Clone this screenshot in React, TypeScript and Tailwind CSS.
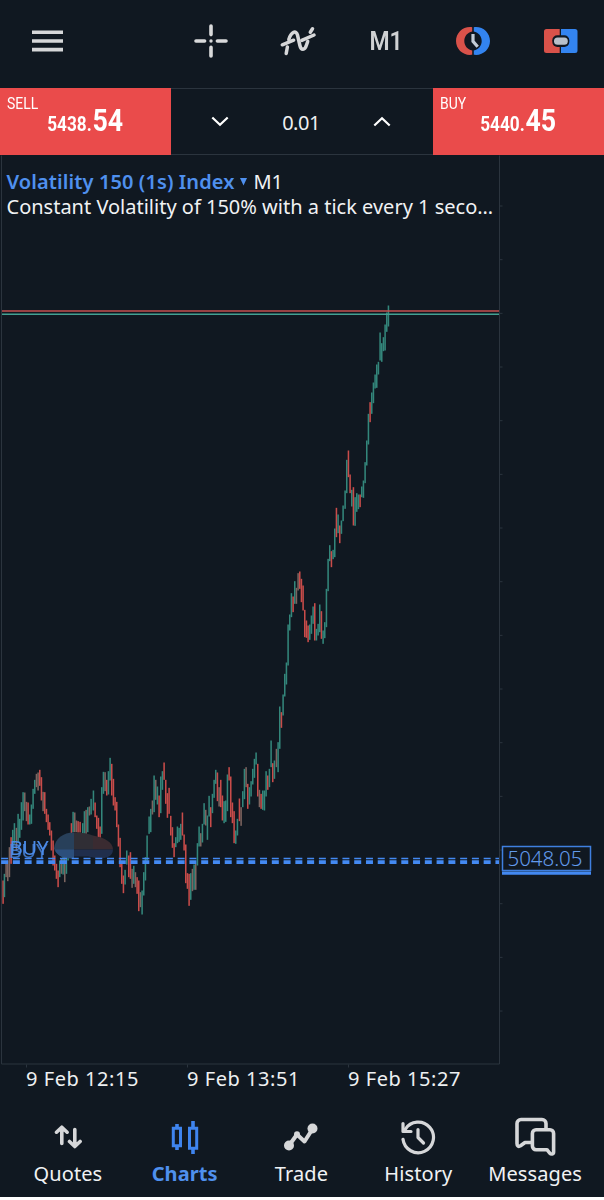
import type { ReactNode } from 'react'

const TEXT_FONT = "font-['Noto_Sans',sans-serif]"

// [x, high, low, kind] in thirds of a pixel. kind: 0 down, 1 up, 2 overlapping
type Bar = [number, number, number, number]

const SEGMENTS: { left: number; top: number; bars: Bar[] }[] = [
  {
    left: 0,
    top: 740,
    bars: [
      [9, 420, 490, 0], [13, 400, 470, 1], [18, 368, 410, 2], [23, 360, 422, 2], [28, 320, 410, 2], [33, 290, 370, 0],
      [38, 268, 330, 1], [43, 248, 310, 1], [49, 262, 330, 2], [54, 220, 305, 1], [59, 235, 292, 1], [64, 185, 268, 1],
      [69, 155, 240, 1], [74, 156, 212, 2], [79, 184, 242, 2], [84, 186, 252, 0], [89, 222, 252, 1], [94, 192, 250, 1],
      [99, 145, 205, 1], [104, 118, 160, 1], [109, 100, 140, 2], [114, 96, 150, 2], [119, 88, 136, 0], [124, 110, 180, 0],
      [129, 154, 212, 2], [134, 155, 220, 0], [139, 205, 245, 0], [144, 222, 268, 0], [149, 245, 285, 0], [154, 270, 330, 0],
      [159, 300, 375, 0], [164, 345, 390, 0], [169, 370, 415, 0], [174, 390, 440, 0], [179, 360, 410, 1], [184, 355, 400, 2],
      [189, 350, 402, 1], [194, 345, 425, 2], [199, 320, 400, 1], [204, 300, 360, 1], [209, 290, 340, 1], [214, 248, 300, 0],
      [219, 214, 275, 1], [224, 216, 275, 2], [229, 240, 275, 2], [234, 242, 276, 0], [240, 244, 276, 0], [248, 248, 290, 1],
      [253, 212, 280, 1], [258, 208, 280, 2], [263, 200, 275, 1], [268, 198, 225, 2], [273, 175, 222, 1], [280, 150, 210, 1],
      [285, 186, 230, 0], [290, 225, 265, 0], [295, 232, 290, 0], [300, 258, 292, 0], [305, 140, 280, 1], [310, 94, 160, 1],
      [315, 95, 152, 2], [320, 118, 165, 0], [325, 92, 162, 1], [330, 52, 120, 1], [335, 70, 165, 0], [340, 115, 195, 0],
      [345, 170, 210, 0], [350, 184, 260, 0], [355, 252, 318, 0], [360, 292, 380, 0], [365, 362, 430, 0], [370, 405, 458, 0],
      [375, 388, 432, 1], [380, 330, 372, 1], [386, 345, 410, 0], [391, 335, 415, 0], [396, 385, 442, 2], [401, 376, 430, 1],
      [406, 395, 440, 2], [411, 410, 460, 0], [416, 420, 512, 0], [421, 455, 500, 2], [426, 450, 522, 1], [431, 395, 465, 1],
      [436, 350, 420, 1], [441, 285, 360, 1],
    ],
  },
  {
    left: 130,
    top: 740,
    bars: [
      [57, 228, 280, 1], [62, 205, 275, 1], [67, 180, 222, 2], [72, 105, 215, 1], [77, 118, 178, 2], [82, 138, 192, 1],
      [87, 165, 230, 0], [92, 108, 218, 1], [97, 92, 148, 1], [102, 66, 118, 0], [107, 118, 190, 0], [112, 158, 232, 0],
      [117, 142, 220, 0], [122, 226, 285, 0], [127, 260, 322, 0], [132, 308, 350, 0], [137, 290, 320, 1], [142, 258, 308, 1],
      [147, 262, 304, 1], [152, 250, 298, 1], [157, 216, 285, 0], [162, 282, 330, 0], [167, 312, 428, 0], [172, 398, 445, 0],
      [177, 400, 496, 0], [182, 398, 478, 1], [187, 385, 452, 2], [192, 372, 448, 1], [197, 370, 448, 2], [202, 308, 375, 1],
      [207, 258, 318, 1], [212, 278, 318, 2], [217, 250, 306, 1], [222, 188, 252, 1], [227, 208, 255, 2], [232, 225, 298, 1],
      [237, 166, 228, 1], [242, 200, 260, 0], [247, 160, 218, 1], [252, 118, 172, 1], [257, 88, 130, 1], [262, 96, 182, 0],
      [267, 140, 198, 2], [272, 118, 200, 0], [277, 165, 240, 0], [282, 182, 248, 1], [287, 180, 244, 1], [292, 102, 212, 1],
      [297, 80, 120, 0], [302, 108, 230, 0], [307, 186, 248, 0], [312, 212, 308, 0], [317, 270, 310, 1], [322, 235, 285, 1],
      [328, 174, 242, 0], [333, 200, 256, 2], [338, 152, 200, 1], [343, 85, 176, 1], [348, 80, 140, 2], [353, 130, 205, 0],
      [358, 140, 192, 1], [363, 122, 168, 1], [368, 85, 132, 1], [373, 55, 112, 1], [378, 36, 72, 1], [383, 70, 168, 0],
      [388, 148, 200, 2], [393, 160, 205, 0], [398, 150, 208, 1], [403, 150, 210, 1], [408, 92, 168, 1], [413, 105, 148, 0],
      [418, 85, 140, 1],
    ],
  },
  {
    left: 255,
    top: 540,
    bars: [
      [48, 600, 680, 1], [53, 668, 725, 0], [58, 660, 715, 1], [64, 625, 680, 2], [69, 605, 695, 1], [74, 498, 625, 1],
      [79, 515, 562, 0], [84, 462, 525, 1], [89, 400, 468, 1], [94, 366, 432, 1], [99, 252, 375, 1], [104, 222, 270, 1],
      [109, 158, 230, 1], [114, 168, 215, 0], [119, 122, 190, 1], [124, 142, 190, 2], [129, 98, 150, 2], [134, 93, 145, 0],
      [139, 115, 185, 0], [144, 135, 210, 0], [149, 208, 290, 0], [154, 240, 292, 0], [159, 255, 305, 0], [164, 252, 298, 1],
      [169, 225, 280, 1], [174, 198, 250, 1], [179, 188, 300, 0], [184, 265, 300, 1], [189, 250, 285, 1], [194, 192, 275, 1],
      [199, 212, 295, 0], [204, 270, 310, 1], [209, 245, 293, 1], [214, 145, 260, 1], [219, 55, 152, 1], [224, 14, 62, 1],
      [229, 32, 80, 0], [234, 28, 56, 1],
    ],
  },
  {
    left: 310,
    top: 290,
    bars: [
      [74, 714, 800, 1], [79, 652, 740, 0], [84, 672, 728, 1], [89, 705, 758, 0], [94, 690, 730, 1], [99, 645, 692, 1],
      [105, 600, 655, 1], [110, 508, 608, 1], [115, 480, 560, 0], [120, 552, 608, 0], [125, 598, 648, 1], [130, 590, 705, 0],
      [135, 620, 706, 1], [140, 608, 664, 1], [145, 612, 656, 1], [150, 612, 650, 0], [155, 588, 620, 1], [160, 570, 622, 1],
      [165, 515, 578, 1], [170, 450, 525, 1], [175, 370, 462, 1], [180, 335, 395, 0], [185, 306, 370, 1], [190, 276, 338, 1],
      [195, 252, 294, 1], [200, 222, 292, 1], [205, 214, 252, 1], [210, 126, 210, 1], [215, 158, 214, 1], [220, 140, 182, 1],
      [225, 102, 180, 1], [230, 66, 124, 1], [235, 45, 108, 1],
    ],
  },
]

const BAR_COLORS = ['#c94c4a', '#33867b', '#7d6560']
const PRICE_TICKS = Array.from({ length: 16 }, (_, i) => 205.5 + i * 53.67)
const TIMES = ['9 Feb 12:15', '9 Feb 13:51', '9 Feb 15:27']

function Toolbar() {
  return (
    <header className="flex h-[88px] shrink-0 items-center pb-[6px]">
      <div className="flex flex-1 pl-[31.5px]">
        <svg width="31" height="22" viewBox="0 0 31 22" fill="#d6d7d9">
          <path d="M0 .5h31v3.6H0zM0 9.2h31v3.6H0zM0 17.8h31v3.6H0z" />
        </svg>
      </div>
      <div className="grid w-[436.5px] grid-cols-5 items-center justify-items-center">
        <svg width="36" height="36" viewBox="0 0 36 36" stroke="#d9dadb" strokeWidth="3.6" strokeLinecap="round">
          <path d="M18 3v8.6M18 24.4V33M3 18h8.6M24.4 18H33" />
          <circle cx="18" cy="18" r="1.7" fill="#d9dadb" stroke="none" />
        </svg>
        <svg width="38" height="34" viewBox="0 0 38 34" fill="none" stroke="#d6d7d9" strokeWidth="3.5" strokeLinecap="round">
          <path d="M3.3 20.8 14.6 16.2M22.8 16.400 35 11" />
          <path d="M7.200 29.500 8.400 23M9.800 15.500C12.200 7.500 17.200 6 18.500 11l2.400 10.500c1.100 5 4.900 5 6.600-.5l1.200-3.500M31.300 8.200l2.200-3.400" />
        </svg>
        <span className="inline-block scale-x-[0.92] font-['Roboto',sans-serif] text-[25px] leading-none font-semibold text-[#cfd1d3]">M1</span>
        <svg width="36" height="30" viewBox="0 0 36 30">
          <path d="M17.2 1.200C8.500-.1 1 6.500 1 15s7.500 15.100 16.200 13.800v-4.300C12.400 23.700 9.300 19.600 9.300 15s3.100-8.700 7.900-9.500z" fill="#d9524a" />
          <path d="M18.800 1.200C27.500-.1 35 6.500 35 15s-7.500 15.100-16.200 13.800v-4.300c4.800-.8 7.900-4.900 7.900-9.500s-3.100-8.700-7.900-9.500z" fill="#3384f0" />
          <path d="M18 8v7.400l4.700 5.300" fill="none" stroke="#c3ccd6" strokeWidth="3.200" />
        </svg>
        <svg width="35" height="26" viewBox="0 0 35 26">
          <path d="M3.500 1h13.200v24H3.500a2.500 2.500 0 0 1-2.500-2.500v-19A2.500 2.500 0 0 1 3.500 1z" fill="#d9524a" />
          <path d="M18 1h14a2.500 2.500 0 0 1 2.500 2.500v19A2.500 2.500 0 0 1 32 25H18z" fill="#3384f0" />
          <rect x="9.300" y="7.300" width="17" height="11.600" rx="5" fill="#101821" />
          <rect x="11" y="9.400" width="13.800" height="7.400" rx="3.500" fill="#b7c0ca" />
        </svg>
      </div>
    </header>
  )
}

function PriceButton({ label, whole, fraction }: { label: string; whole: string; fraction: string }) {
  return (
    <button className="relative flex h-full w-[171px] justify-center bg-[#ea4b4b] font-['Roboto',sans-serif] text-white">
      <span className="absolute top-[4px] left-[7px] origin-left scale-x-[0.82] text-[17px] leading-[22px]">{label}</span>
      <span className="mt-[13px] flex scale-x-[0.86] items-baseline leading-[40px] font-bold">
        <span className="text-[20px]">{whole}</span>
        <span className="ml-px text-[31px]">{fraction}</span>
      </span>
    </button>
  )
}

function TradeRow() {
  return (
    <div className="flex h-[66.5px] shrink-0">
      <PriceButton label="SELL" whole="5438." fraction="54" />
      <div className="grid flex-1 grid-cols-3 items-center justify-items-center border-y border-[#2b343e] pr-[11px] pl-[9px]">
        <svg width="18" height="11" viewBox="0 0 18 11" fill="none" stroke="#fff" strokeWidth="2.2">
          <path d="m1.300 1.500 7.700 7.200 7.700-7.200" />
        </svg>
        <span className={`${TEXT_FONT} mt-[3px] text-[20px] tracking-[-0.5px] text-[#eef0f2]`}>0.01</span>
        <svg width="18" height="11" viewBox="0 0 18 11" fill="none" stroke="#fff" strokeWidth="2.2">
          <path d="m1.300 9.500 7.700-7.200 7.700 7.200" />
        </svg>
      </div>
      <PriceButton label="BUY" whole="5440." fraction="45" />
    </div>
  )
}

function PriceChart() {
  return (
    <svg className="block" width="604" height="915" viewBox="0 154.500 604 915" fontFamily="'Noto Sans', sans-serif">
      <g stroke="#2b343e">
        <path d="M1.500 155V1063.500H499.500V155" fill="none" />
        {PRICE_TICKS.map(y => <path key={y} d={`M500 ${y}h2.500`} />)}
        <path d="M26.500 1064v3M187.500 1064v3M348.500 1064v3" />
      </g>

      {SEGMENTS.map(seg => (
        <g key={seg.left} transform={`translate(${seg.left} ${seg.top}) scale(0.33333)`}>
          {seg.bars.map(([x, high, low, kind]) => (
            <rect key={x} x={x - 2} y={high} width="4.600" height={low - high} fill={BAR_COLORS[kind]} />
          ))}
        </g>
      ))}

      <path d="M2 310.500H499" stroke="#c45150" strokeWidth="1.400" />
      <path d="M2 313.700H499" stroke="#43a193" strokeWidth="1.400" />

      {/* hidden lot size next to the order label */}
      <g>
        <path d="M54 848C55 838 63 832 74 832V858C64 858 56 855 54 848z" fill="#28405a" />
        <path d="M55 849H74V858C64 858 57 856 55 849z" fill="#2c4f7c" />
        <path d="M74 832C82 832 88 833 93 835V849H74z" fill="#302e35" />
        <path d="M93 835C105 837 113 842 113 849H93z" fill="#3a2b31" />
        <path d="M74 849H113C113 855 108 858 98 858L88 856 74 856z" fill="#202e4c" />
      </g>

      <g fill="none" stroke="#4389f2" strokeDasharray="7 4.770">
        <path d="M1.100 858H499" strokeWidth="1.600" />
        <path d="M1.100 861.600H499" strokeWidth="3.600" />
      </g>
      <text className="drop-shadow-[-1px_3px_0_#4b8be8cc]" x="9.500" y="854" fill="#4b8be8" fontSize="20.500" textLength="39">BUY</text>

      <rect x="502.500" y="846" width="88" height="24" fill="#101821" stroke="#3f7fe0" strokeWidth="1.500" />
      <path d="M502 872.700h89" stroke="#4389f2" strokeWidth="3.200" />
      <text x="507.500" y="865.500" fill="#629aec" fontSize="20.500" fontWeight="300" textLength="75">5048.05</text>
    </svg>
  )
}

function ChartPanel() {
  return (
    <section className="relative shrink-0">
      <PriceChart />
      <div className={`${TEXT_FONT} absolute top-[14px] left-[6.5px] w-[490px] text-[20px] leading-[25px] whitespace-nowrap text-[#f0f2f4]`}>
        <div className="flex items-center">
          <span className="font-semibold text-[#4f90ee] tracking-[0.1px]">Volatility 150 (1s) Index</span>
          <svg className="mt-px mr-[6px] ml-[6px]" width="7" height="8" viewBox="0 0 7 8" fill="#4f90ee">
            <path d="M0 0h7L3.500 7.500z" />
          </svg>
          <span>M1</span>
        </div>
        <div>Constant Volatility of 150% with a tick every 1 seco…</div>
      </div>
    </section>
  )
}

function TimeAxis() {
  return (
    <div className={`${TEXT_FONT} flex h-[30px] shrink-0 pl-[26px] text-[20px] leading-[18px] tracking-[0.55px] text-[#eef0f2]`}>
      {TIMES.map(t => <span key={t} className="w-[161px] whitespace-nowrap">{t}</span>)}
    </div>
  )
}

function NavItem({ label, active, children }: { label: string; active?: boolean; children: ReactNode }) {
  return (
    <button className={`flex w-[116.8px] flex-col items-center ${active ? 'font-bold text-[#4f90ee]' : 'text-[#f0f2f4]'}`}>
      <span className="flex h-[44px] items-center">{children}</span>
      <span className="text-[20px] leading-[30px] tracking-[0.1px]">{label}</span>
    </button>
  )
}

function BottomNav() {
  return (
    <nav className={`${TEXT_FONT} flex flex-1 justify-center border-b-[3px] border-white pt-[15px] pr-px`}>
      <NavItem label="Quotes">
        <svg width="28" height="26" viewBox="0 0 28 26" fill="none" stroke="#d6d7d9" strokeWidth="3.6" strokeLinecap="round" strokeLinejoin="round">
          <path d="M7.800 19.500V3.500M2.500 8.200l5.300-5 5.300 5M20.800 5.500v16M15.500 17.500l5.300 5 5.300-5" />
        </svg>
      </NavItem>
      <NavItem label="Charts" active>
        <svg width="28" height="34" viewBox="0 0 28 34" fill="none" stroke="#3f84ee" strokeWidth="3">
          <path d="M6 4v4M6 26v4M22 1v6M22 28v6" strokeWidth="3.6" />
          <path d="M2.300 8.200h7.200v17.600H2.300zM18.500 8.200h7.200v20H18.500z" />
        </svg>
      </NavItem>
      <NavItem label="Trade">
        <svg width="36" height="30" viewBox="0 0 36 30" fill="none" stroke="#d6d7d9" strokeWidth="4" strokeLinecap="round" strokeLinejoin="round">
          <path d="M6 23.500 14 12.500l7.500 7L29.500 7" />
          <circle cx="6" cy="23.500" r="5" fill="#d6d7d9" stroke="none" />
          <circle cx="29.500" cy="6.500" r="5" fill="#d6d7d9" stroke="none" />
          <circle cx="14" cy="12.300" r="3" fill="#d6d7d9" stroke="none" />
        </svg>
      </NavItem>
      <NavItem label="History">
        <svg width="36" height="36" viewBox="0 0 36 36" fill="none" stroke="#d6d7d9" strokeWidth="3.2" strokeLinecap="round" strokeLinejoin="round">
          <path d="M3 20.300A15.300 15.300 0 1 0 5.200 10.300" />
          <path d="M3 4.500v8h8" />
          <path d="M18 10.500v8l5.500 5.500" />
        </svg>
      </NavItem>
      <NavItem label="Messages">
        <svg width="42" height="39" viewBox="0 0 42 39" fill="none" stroke="#d6d7d9" strokeWidth="3.6" strokeLinejoin="round" strokeLinecap="round">
          <path d="M17 25.500H11L6.500 28.800C4.500 30 3 29 3 26.500V6.500A4 4 0 0 1 7 2.500H28a4 4 0 0 1 4 4V12" />
          <path d="M22 12.800H36a3.600 3.600 0 0 1 3.600 3.600V35c0 2.500-2.500 2.500-4 1l-2.600-3.300H22a3.600 3.600 0 0 1-3.600-3.600V16.400A3.600 3.600 0 0 1 22 12.800z" />
        </svg>
      </NavItem>
    </nav>
  )
}

export default function App() {
  return (
    <div className="flex h-[1200px] w-[604px] flex-col overflow-hidden bg-[#101821]">
      <Toolbar />
      <TradeRow />
      <ChartPanel />
      <TimeAxis />
      <BottomNav />
    </div>
  )
}
